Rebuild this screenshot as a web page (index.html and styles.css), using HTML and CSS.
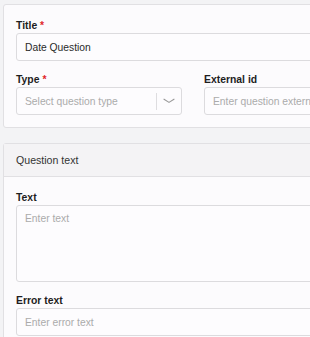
FILE: index.html
```html
<!DOCTYPE html>
<html>
<head>
<meta charset="utf-8">
<link rel="stylesheet" href="styles.css">
</head>
<body>
<div class="page">
  <div class="card">
    <div class="card-body">
      <div class="field">
        <div class="label">Title <span class="req">*</span></div>
        <div class="input"><span class="value">Date Question</span></div>
      </div>
      <div class="row">
        <div class="field">
          <div class="label">Type <span class="req">*</span></div>
          <div class="input select">
            <span class="ph">Select question type</span>
            <span class="sep"></span>
            <svg class="chev" width="12" height="6" viewBox="0 0 12 6"><path d="M1 1.2 L6 4.4 L11 1.2" fill="none" stroke="#999" stroke-width="1.1" stroke-linecap="round" stroke-linejoin="round"/></svg>
          </div>
        </div>
        <div class="field">
          <div class="label">External id</div>
          <div class="input"><span class="ph">Enter question external id</span></div>
        </div>
      </div>
    </div>
  </div>

  <div class="card card2">
    <div class="card-header">Question text</div>
    <div class="card-body body2">
      <div class="field">
        <div class="label">Text</div>
        <div class="input textarea"><span class="ph">Enter text</span></div>
      </div>
      <div class="field">
        <div class="label">Error text</div>
        <div class="input"><span class="ph">Enter error text</span></div>
      </div>
    </div>
  </div>
</div>
</body>
</html>
```

FILE: styles.css
```css
html, body {
  margin: 0;
  padding: 0;
}
body {
  background: #f3f3f5;
  font-family: "Liberation Sans", Arial, sans-serif;
  color: #222;
  overflow: hidden;
  width: 310px;
  height: 337px;
}
.page {
  padding: 4px 0 0 3px;
  display: flex;
  flex-direction: column;
  gap: 15px;
}
.card {
  width: 380px;
  background: #fcfbfd;
  border: 1px solid #e1e0e3;
  border-radius: 3px;
}
.card-body {
  padding: 14px 12px 12px 12px;
  display: flex;
  flex-direction: column;
  gap: 12px;
}
.body2 {
  padding-top: 14px;
}
.card-header {
  height: 32px;
  background: #f4f3f5;
  border-bottom: 1px solid #e1e0e3;
  display: flex;
  align-items: center;
  padding-left: 12px;
  font-size: 10.6px;
  color: #333;
}
.row {
  display: grid;
  grid-template-columns: 166px 1fr;
  gap: 22px;
}
.label {
  font-size: 10.4px;
  font-weight: bold;
  line-height: 14px;
  color: #1e1e1e;
}
.req {
  color: #e0262b;
}
.input {
  box-sizing: border-box;
  height: 28px;
  border: 1px solid #dcdbde;
  border-radius: 3px;
  background: #fdfcfe;
  display: flex;
  align-items: center;
  padding-left: 8px;
  font-size: 10.3px;
  white-space: nowrap;
  overflow: hidden;
}
.value {
  color: #2a2a2a;
}
.ph {
  color: #ababab;
}
.select .ph {
  flex: 1;
}
.sep {
  width: 1px;
  height: 17px;
  background: #dedde0;
  margin-right: 6px;
}
.chev {
  margin-right: 6px;
}
.textarea {
  height: 77px;
  align-items: flex-start;
  padding-top: 7px;
}
```
